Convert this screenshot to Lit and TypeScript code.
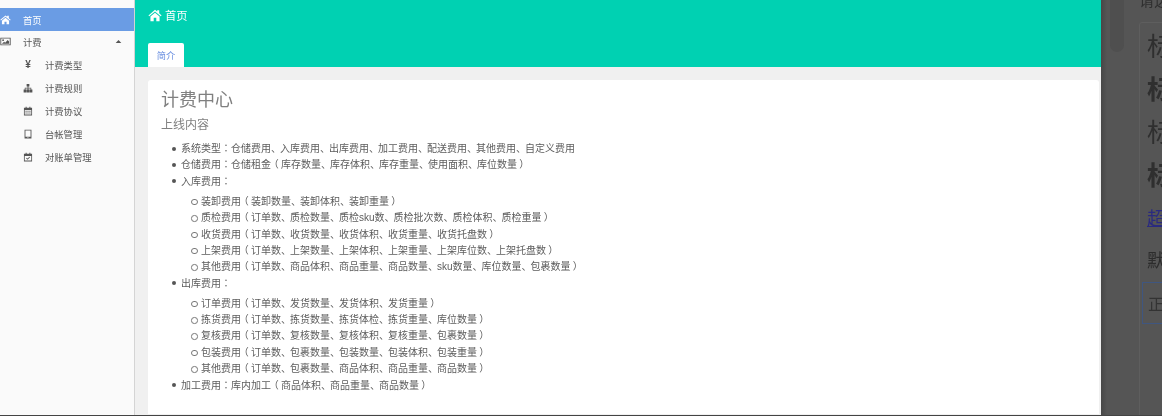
import { LitElement, html, css, svg } from "lit";
import { customElement } from "lit/decorators.js";

const icons: Record<string, any> = {
  home: svg`<path d="M.5 8.500 8 2l2.500 2.100V2.500h2.300v3.600L15.500 8.500l-.9 1L8 3.900 1.400 9.500zM2.800 9.800 8 5.300l5.200 4.500V15H9.500v-3.800h-3V15H2.800z"/>`,
  image: svg`<path fill-rule="evenodd" d="M.5 2.500h15v11H.5zm1.300 1.300v8.400h12.400V3.800z"/><circle cx="4.500" cy="6" r="1.300"/><path d="M2.800 11.300 6 8.200l1.500 1.500 3.700-3.900 2 2.300v3.200z"/>`,
  sitemap: svg`<path d="M5.800 1.500h4.400v4H8.700v2H13.200v3H15V15h-4.400v-4.500h1.500V8.700H8.700v1.800h1.500V15H5.800v-4.500h1.500V8.700H3.900v1.800h1.500V15H1v-4.500h1.800v-3h4.500v-2H5.800z"/>`,
  calendar: svg`<path fill-rule="evenodd" d="M1.500 2.800h2.700V1h1.600v1.800h4.400V1h1.600v1.800h2.700V15h-13zm1.300 3.700v7.200h10.400V6.500z"/><path d="M4 7.500h1.800V9H4zm3.100 0h1.800V9H7.100zm3.100 0H12V9h-1.800zM4 10.500h1.800V12H4zm3.100 0h1.800V12H7.100zm3.100 0H12V12h-1.800z"/>`,
  tablet: svg`<path fill-rule="evenodd" d="M2.500 1h11v14h-11zm1.400 1.400v9.800h8.200V2.400zM8 12.700a.8.800 0 1 0 0 1.600.8.800 0 0 0 0-1.600z"/>`,
  check: svg`<path fill-rule="evenodd" d="M1.500 2.800h2.700V1h1.600v1.800h4.400V1h1.600v1.800h2.700V15h-13zm1.300 3.700v7.200h10.400V6.500z"/><path d="m4.800 10 1-1 1.500 1.500 3-3 1 1-4 4z"/>`,
  up: svg`<path d="M8 4.500 14.500 11.500H1.500z"/>`,
};

const icon = (n: string, cls = "") => html`<svg class="ic ${cls}" viewBox="0 0 16 16" fill="currentColor">${icons[n]}</svg>`;

/* Full-width colon and brackets sit centred in their cell and the enumeration comma is a little tighter in the reference. */
const t = (s: string) =>
  s.split(/([：（）、])/).map((p) => {
    if (p === "、") return html`<span class="dun">、</span>`;
    if (p === "：") return html`<span class="mid">：</span>`;
    if (p === "（" || p === "）") return html`<span class="br">${p}</span>`;
    return p;
  });

const sub = [
  ["yen", "计费类型"],
  ["sitemap", "计费规则"],
  ["calendar", "计费协议"],
  ["tablet", "台帐管理"],
  ["check", "对账单管理"],
];

const inbound = [
  "装卸费用（装卸数量、装卸体积、装卸重量）",
  "质检费用（订单数、质检数量、质检sku数、质检批次数、质检体积、质检重量）",
  "收货费用（订单数、收货数量、收货体积、收货重量、收货托盘数）",
  "上架费用（订单数、上架数量、上架体积、上架重量、上架库位数、上架托盘数）",
  "其他费用（订单数、商品体积、商品重量、商品数量、sku数量、库位数量、包裹数量）",
];
const outbound = [
  "订单费用（订单数、发货数量、发货体积、发货重量）",
  "拣货费用（订单数、拣货数量、拣货体检、拣货重量、库位数量）",
  "复核费用（订单数、复核数量、复核体积、复核重量、包裹数量）",
  "包装费用（订单数、包裹数量、包装数量、包装体积、包装重量）",
  "其他费用（订单数、包裹数量、商品体积、商品重量、商品数量）",
];

@customElement("app-root")
export class AppRoot extends LitElement {
  static styles = css`
    :host { display: block; width: 1162px; height: 416px; overflow: hidden; position: relative; background: #444; font-family: "Liberation Sans", "Noto Sans CJK SC", sans-serif; }
    * { box-sizing: border-box; }
    .page { display: flex; width: 1101px; height: 415px; filter: blur(0.3px); background: #f0f0f0; }
    .side { width: 135px; flex: none; background: #fafafa; border-right: 1px solid #d4d4d4; padding-top: 8px; font-size: 9.300px; color: #555; }
    .it { display: flex; align-items: center; height: 23px; padding-bottom: 2px; }
    .it.active { background: #6a9ce4; color: #fff; padding-bottom: 0; }
    .it .ic { width: 11px; height: 11px; flex: none; }
    .it .lbl { margin-left: 12px; }
    .it .caret { width: 7px; height: 7px; margin-left: auto; margin-right: 12px; }
    .it.s .ic, .it.s .yen { width: 10px; height: 10px; margin-left: 23px; flex: none; }
    .it.s .yen { font-size: 10px; line-height: 10px; text-align: center; font-weight: 700; }
    .it.s .lbl { margin-left: 12px; }
    .main { flex: 1; min-width: 0; display: flex; flex-direction: column; background: #f0f0f0; }
    .top { height: 67px; flex: none; background: #00d1b2; padding: 0 13px; display: flex; flex-direction: column; justify-content: space-between; }
    .crumb { display: flex; align-items: center; gap: 3px; color: #fff; font-size: 11.300px; height: 29px; }
    .crumb .ic { width: 14px; height: 14px; }
    .tab { width: 36px; height: 24px; background: #fff; border-radius: 2px 2px 0 0; color: #6a8fe0; font-size: 9.300px; display: flex; align-items: center; justify-content: center; }
    .card { flex: 1; margin: 13px 2px 1px 13px; background: #fff; border-radius: 3px 3px 0 0; padding: 10px 13px 0; overflow: hidden; }
    h1 { margin: 0; font-weight: 400; font-size: 18px; line-height: 20px; color: #808080; }
    h2 { margin: 7px 0 0; font-weight: 400; font-size: 12px; line-height: 16px; color: #808080; }
    ul { margin: 0; padding: 0 0 0 20px; list-style: none; font-size: 10px; line-height: 16.400px; color: #5c5c5c; }
    li { position: relative; }
    li::before { content: ""; position: absolute; left: -9px; top: 5.500px; width: 4px; height: 4px; border-radius: 50%; background: #555; }
    .root { margin-top: 8px; }
    ul ul { margin: 3.500px 0 0; }
    ul ul li::before { left: -10px; top: 5px; width: 4.500px; height: 4.500px; background: none; border: 1px solid #777; }
    .mid { font-family: "Noto Sans CJK TC", sans-serif; line-height: 0; }
    .br { display: inline-block; width: 10px; text-align: center; line-height: 0; font-feature-settings: "palt"; }
    .dun { letter-spacing: -1px; }
    .overlay { position: absolute; left: 1101px; top: 0; width: 61px; height: 415px; background: #555; overflow: hidden; color: #333; font-family: "Noto Sans CJK SC", sans-serif; filter: blur(0.3px); }
    .edge { position: absolute; left: 0; top: 0; width: 6px; height: 100%; background: linear-gradient(90deg, #474747, #555); }
    .thumb { position: absolute; left: 9px; top: -20px; width: 14px; height: 72px; border-radius: 7px; background: #4f4f4f; }
    .panel { position: absolute; left: 38px; top: 22px; width: 60px; height: 420px; border: 1px solid #5e5e5e; border-radius: 3px; }
    .ot { position: absolute; left: 46px; font-size: 26px; line-height: 30px; color: #2f2f2f; white-space: nowrap; }
    .b { font-weight: 700; }
    .r1 { top: 30px; } .r2 { top: 73px; } .r3 { top: 116px; } .r4 { top: 159px; }
    .lnk { font-size: 18px; line-height: 22px; color: #2a2a80; text-decoration: underline; top: 206px; }
    .def { font-size: 18px; line-height: 22px; top: 248px; color: #2c2c2c; }
    .box { position: absolute; left: 41px; top: 282px; width: 40px; height: 42px; border: 1px solid #3f5680; font-size: 16px; line-height: 40px; padding-left: 5px; color: #333; white-space: nowrap; }
    .hd { position: absolute; left: 38px; top: -9px; font-size: 15px; line-height: 18px; color: #2f2f2f; white-space: nowrap; }
  `;

  render() {
    return html`
      <div class="page">
        <nav class="side">
          <div class="it active">${icon("home")}<span class="lbl">首页</span></div>
          <div class="it">${icon("image")}<span class="lbl">计费</span>${icon("up", "caret")}</div>
          ${sub.map(([i, s]) => html`<div class="it s">${i === "yen" ? html`<span class="yen">¥</span>` : icon(i)}<span class="lbl">${s}</span></div>`)}
        </nav>
        <div class="main">
          <div class="top">
            <div class="crumb">${icon("home")}<span>首页</span></div>
            <div class="tab">简介</div>
          </div>
          <div class="card">
            <h1>计费中心</h1>
            <h2>上线内容</h2>
            <ul class="root">
              <li>${t("系统类型：仓储费用、入库费用、出库费用、加工费用、配送费用、其他费用、自定义费用")}</li>
              <li>${t("仓储费用：仓储租金（库存数量、库存体积、库存重量、使用面积、库位数量）")}</li>
              <li>${t("入库费用：")}
                <ul>${inbound.map((s) => html`<li>${t(s)}</li>`)}</ul>
              </li>
              <li>${t("出库费用：")}
                <ul>${outbound.map((s) => html`<li>${t(s)}</li>`)}</ul>
              </li>
              <li>${t("加工费用：库内加工（商品体积、商品重量、商品数量）")}</li>
            </ul>
          </div>
        </div>
      </div>
      <div class="overlay">
        <div class="edge"></div>
        <div class="thumb"></div>
        <div class="panel"></div>
        <div class="hd">请选</div>
        <div class="ot r1">标</div>
        <div class="ot b r2">标</div>
        <div class="ot r3">标</div>
        <div class="ot b r4">标</div>
        <div class="ot lnk">超</div>
        <div class="ot def">默</div>
        <div class="box">正</div>
      </div>
    `;
  }
}
